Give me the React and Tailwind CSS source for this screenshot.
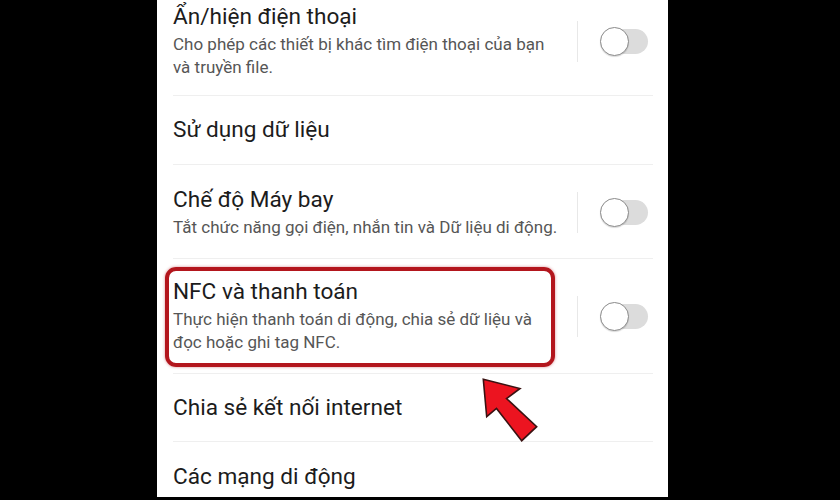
import React from "react";

function Toggle() {
  return (
    <div className="flex items-center shrink-0">
      <div className="w-px h-[41px] bg-[#e8e8e8]" />
      <div className="relative ml-[22px] w-[48px] h-[30px] flex items-center">
        <div className="absolute left-[4px] right-0 h-[25px] rounded-full bg-[#dcdcdc]" />
        <div className="relative w-[29px] h-[29px] rounded-full bg-white border border-[#8a8a8a] shadow-[0_1px_1px_rgba(0,0,0,0.15)]" />
      </div>
    </div>
  );
}

function Divider() {
  return <div className="h-px ml-[16px] mr-[15px] bg-[#efefef]" />;
}

const titleCls = "text-[22.6px] leading-[28px] text-[#1c1c1c]";
const subCls = "text-[17px] leading-[23px] text-[#565656] mt-[2px]";

export default function App() {
  return (
    <div
      className="w-[840px] h-[500px] bg-black flex overflow-hidden"
      style={{ fontFamily: "Roboto, 'Noto Sans', sans-serif" }}
    >
      <div className="relative ml-[157px] w-[511px] h-[497px] bg-white overflow-hidden">
        <div className="flex flex-col">
          {/* Row 1 */}
          <div className="h-[95px] pt-[3px] pl-[16px] pr-[20px] flex items-start">
            <div className="flex-1 flex items-center">
              <div className="flex-1">
                <div className={titleCls}>Ẩn/hiện điện thoại</div>
                <div className={subCls}>
                  Cho phép các thiết bị khác tìm điện thoại của bạn
                  <br />
                  và truyền file.
                </div>
              </div>
              <Toggle />
            </div>
          </div>
          <Divider />
          {/* Row 2 */}
          <div className="h-[68px] pl-[16px] flex items-center">
            <div className={titleCls}>Sử dụng dữ liệu</div>
          </div>
          <Divider />
          {/* Row 3 */}
          <div className="h-[93px] pt-[21px] pl-[16px] pr-[20px]">
            <div className="flex items-center">
              <div className="flex-1">
                <div className={titleCls}>Chế độ Máy bay</div>
                <div className={subCls}>
                  Tắt chức năng gọi điện, nhắn tin và Dữ liệu di động.
                </div>
              </div>
              <Toggle />
            </div>
          </div>
          <Divider />
          {/* Row 4 */}
          <div className="h-[114px] pt-[19px] pl-[16px] pr-[20px]">
            <div className="flex items-center">
              <div className="flex-1">
                <div className={titleCls}>NFC và thanh toán</div>
                <div className={subCls}>
                  Thực hiện thanh toán di động, chia sẻ dữ liệu và
                  <br />
                  đọc hoặc ghi tag NFC.
                </div>
              </div>
              <Toggle />
            </div>
          </div>
          <Divider />
          {/* Row 5 */}
          <div className="h-[67px] pl-[16px] flex items-center">
            <div className={titleCls}>Chia sẻ kết nối internet</div>
          </div>
          <Divider />
          {/* Row 6 */}
          <div className="pt-[21px] pl-[16px]">
            <div className={titleCls}>Các mạng di động</div>
          </div>
        </div>

        {/* Red highlight box */}
        <div className="absolute left-[8px] top-[267px] w-[390px] h-[100px] rounded-[11px] border-[4px] border-[#b3161d] shadow-[0_0_3px_rgba(180,20,30,0.5)]" />

        {/* Arrow */}
        <svg
          className="absolute left-0 top-0"
          width="511"
          height="497"
          viewBox="157 0 511 497"
        >
          <polygon
            points="483.3,379.3 520,388.5 506.5,398.5 536.7,426.7 521.7,440.7 496.5,408.5 486.7,416.7"
            fill="#ec1420"
            stroke="#3a1212"
            strokeWidth="1.6"
            strokeLinejoin="miter"
          />
        </svg>
      </div>
    </div>
  );
}
